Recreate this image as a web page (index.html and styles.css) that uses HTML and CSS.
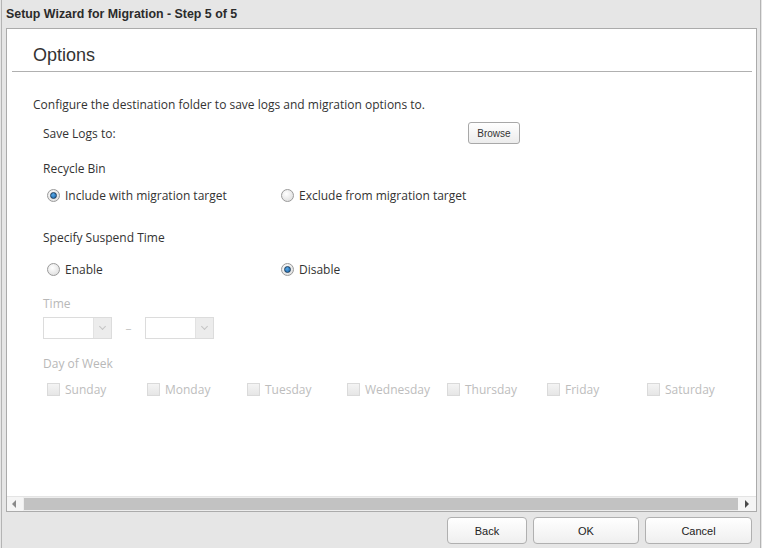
FILE: index.html
```html
<!DOCTYPE html>
<html lang="en">

<head>
    <meta charset="UTF-8">
    <meta name="viewport" content="width=device-width, initial-scale=1.0">
    <title>Setup Wizard for Migration</title>
    <link rel="stylesheet" href="styles.css">
</head>

<body>
    <div class="window">
        <div class="titlebar">Setup Wizard for Migration - Step 5 of 5</div>

        <div class="panel">
            <div class="content">
                <h1 class="heading">Options</h1>

                <p class="intro">Configure the destination folder to save logs and migration options to.</p>

                <div class="row save-row">
                    <span class="save-label">Save Logs to:</span>
                    <button class="small-btn">Browse</button>
                </div>

                <!-- recycle bin -->
                <div class="label recycle">Recycle Bin</div>
                <div class="row radios">
                    <label class="opt"><span class="radio checked"></span>Include with migration target</label>
                    <label class="opt"><span class="radio"></span>Exclude from migration target</label>
                </div>

                <!-- suspend time -->
                <div class="label suspend">Specify Suspend Time</div>
                <div class="row radios enable-row">
                    <label class="opt"><span class="radio"></span>Enable</label>
                    <label class="opt"><span class="radio checked"></span>Disable</label>
                </div>

                <div class="label disabled time-label">Time</div>
                <div class="row selects">
                    <div class="select"><span class="arrow"></span></div>
                    <span class="dash">&ndash;</span>
                    <div class="select"><span class="arrow"></span></div>
                </div>

                <div class="label disabled day-label">Day of Week</div>
                <div class="row days">
                    <label class="day"><span class="check"></span>Sunday</label>
                    <label class="day"><span class="check"></span>Monday</label>
                    <label class="day"><span class="check"></span>Tuesday</label>
                    <label class="day"><span class="check"></span>Wednesday</label>
                    <label class="day"><span class="check"></span>Thursday</label>
                    <label class="day"><span class="check"></span>Friday</label>
                    <label class="day"><span class="check"></span>Saturday</label>
                </div>
            </div>

            <!-- horizontal scroll bar -->
            <div class="hscroll">
                <span class="sarrow left"></span>
                <span class="thumb"></span>
                <span class="sarrow right"></span>
            </div>
        </div>

        <div class="footer">
            <button class="btn back">Back</button>
            <button class="btn ok">OK</button>
            <button class="btn cancel">Cancel</button>
        </div>
    </div>
</body>

</html>
```

FILE: styles.css
```css
* {
    margin: 0;
    padding: 0;
    box-sizing: border-box;
    font-family: "Open Sans", "Liberation Sans", sans-serif;
}

body {
    background-color: #e6e6e6;
    color: #333;
    font-size: 12px;
}

.window {
    width: 760px;
    height: 548px;
    margin: 0 1px;
    border-left: 1px solid #b4b4b4;
    border-right: 1px solid #b4b4b4;
    display: flex;
    flex-direction: column;
}

.titlebar {
    height: 28px;
    padding-left: 4px;
    line-height: 28px;
    font-family: "Liberation Sans", Arial, sans-serif;
    font-weight: bold;
    font-size: 12.4px;
    color: #2b2b2b;
}

.panel {
    height: 484px;
    margin: 0 3px 0 4px;
    border: 1px solid #ababab;
    background-color: white;
    display: flex;
    flex-direction: column;
}

.content {
    flex: 1;
    overflow: hidden;
}

.heading {
    margin: 0 4px 0 5px;
    padding: 14px 0 4px 21px;
    border-bottom: 1px solid #b0b0b0;
    font-family: "Liberation Sans", Arial, sans-serif;
    font-size: 18px;
    font-weight: normal;
    line-height: 24px;
    color: #333;
}

.intro {
    margin: 25px 0 0 26px;
    line-height: 16px;
}

.row {
    display: flex;
    align-items: center;
    margin-left: 36px;
}

.save-row {
    margin-top: 9px;
    height: 22px;
}

.save-label {
    width: 425px;
}

.small-btn {
    width: 52px;
    height: 22px;
    border: 1px solid #a8a8a8;
    border-radius: 3px;
    background: linear-gradient(#ffffff, #ececec);
    font-family: "Liberation Sans", Arial, sans-serif;
    font-size: 10px;
    color: #333;
}

.label {
    margin-left: 36px;
    line-height: 16px;
}

.recycle {
    margin-top: 17px;
}

.suspend {
    margin-top: 27px;
}

.radios {
    margin-top: 10px;
    height: 16px;
}

.enable-row {
    margin-top: 15px;
}

.opt {
    width: 234px;
    display: flex;
    align-items: center;
    margin-left: 4px;
    margin-right: -4px;
}

.radio {
    width: 13px;
    height: 13px;
    margin-right: 5px;
    border: 1px solid #9a9a9a;
    border-radius: 50%;
    background: radial-gradient(circle at 40% 35%, #ffffff, #d8d8d8);
    position: relative;
}

.radio.checked::after {
    content: "";
    position: absolute;
    left: 2px;
    top: 2px;
    width: 5px;
    height: 5px;
    border: 1px solid #1d3d5c;
    border-radius: 50%;
    background: radial-gradient(circle at 40% 35%, #5aa9e6, #1561a8);
}

.disabled {
    color: #b8b8b8;
}

.time-label {
    margin-top: 19px;
}

.selects {
    margin-top: 5px;
    height: 22px;
}

.select {
    width: 69px;
    height: 22px;
    border: 1px solid #dcdcdc;
    background-color: white;
    display: flex;
    justify-content: flex-end;
}

.arrow {
    width: 18px;
    height: 20px;
    background-color: #ececec;
    border-left: 1px solid #e2e2e2;
    position: relative;
}

.arrow::after {
    content: "";
    position: absolute;
    left: 6px;
    top: 6px;
    width: 4px;
    height: 4px;
    border-right: 1px solid #c4c4c4;
    border-bottom: 1px solid #c4c4c4;
    transform: rotate(45deg);
}

.dash {
    width: 33px;
    text-align: center;
    color: #c8c8c8;
}

.day-label {
    margin-top: 17px;
}

.days {
    margin-top: 9px;
    height: 16px;
}

.day {
    width: 100px;
    display: flex;
    align-items: center;
    margin-left: 4px;
    margin-right: -4px;
    color: #bdbdbd;
}

.check {
    width: 13px;
    height: 13px;
    margin-right: 5px;
    border: 1px solid #dadada;
    background: linear-gradient(#f4f4f4, #e6e6e6);
}

.hscroll {
    height: 15px;
    display: flex;
    align-items: stretch;
    background-color: #ededed;
    border-top: 1px solid #e4e4e4;
}

.sarrow {
    width: 16px;
    position: relative;
    background-color: #f5f5f5;
}

.sarrow::after {
    content: "";
    position: absolute;
    top: 3px;
    border-top: 4px solid transparent;
    border-bottom: 4px solid transparent;
}

.sarrow.left::after {
    left: 5px;
    border-right: 4px solid #8a8a8a;
}

.sarrow.right {
    width: 18px;
}

.sarrow.right::after {
    left: 7px;
    border-left: 4px solid #4a4a4a;
}

.thumb {
    flex: 1;
    margin: 1px 0 1px 1px;
    background-color: #c2c2c2;
}

.footer {
    display: flex;
    justify-content: flex-end;
    gap: 6px;
    padding: 5px 8px 0 0;
}

.btn {
    height: 27px;
    border: 1px solid #b0b0b0;
    border-radius: 4px;
    background: linear-gradient(#ffffff, #efefef);
    font-family: "Liberation Sans", Arial, sans-serif;
    font-size: 11px;
    color: #222;
}

.back {
    width: 80px;
}

.ok {
    width: 106px;
}

.cancel {
    width: 107px;
}
```
